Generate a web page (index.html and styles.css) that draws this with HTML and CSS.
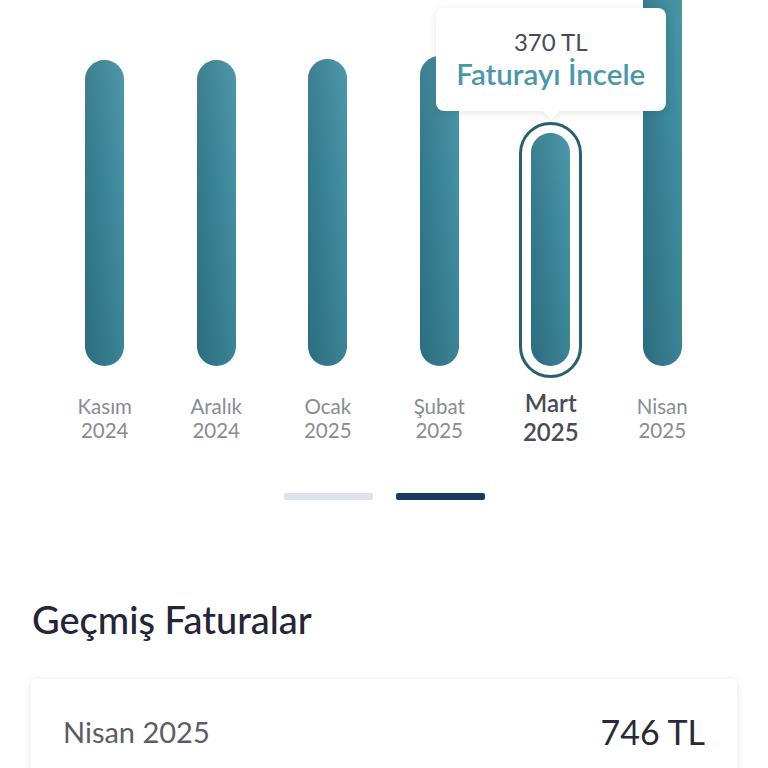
FILE: index.html
```html
<!DOCTYPE html>
<html lang="tr">
<head>
<meta charset="utf-8">
<link rel="stylesheet" href="styles.css">
</head>
<body>
<div class="page">
  <div class="chart">
    <div class="col">
      <div class="bar-area"><div class="bar" style="height:306px"></div></div>
      <div class="label">Kasım<br>2024</div>
    </div>
    <div class="col">
      <div class="bar-area"><div class="bar" style="height:306px"></div></div>
      <div class="label">Aralık<br>2024</div>
    </div>
    <div class="col">
      <div class="bar-area"><div class="bar" style="height:307px"></div></div>
      <div class="label">Ocak<br>2025</div>
    </div>
    <div class="col">
      <div class="bar-area"><div class="bar" style="height:310px"></div></div>
      <div class="label">Şubat<br>2025</div>
    </div>
    <div class="col">
      <div class="bar-area">
        <div class="bar selected" style="height:233px">
          <div class="tooltip">
            <div class="tt-amount">370 TL</div>
            <div class="tt-link">Faturayı İncele</div>
          </div>
        </div>
      </div>
      <div class="label active">Mart<br>2025</div>
    </div>
    <div class="col">
      <div class="bar-area"><div class="bar" style="height:420px"></div></div>
      <div class="label">Nisan<br>2025</div>
    </div>
  </div>

  <div class="pager">
    <span class="dot"></span>
    <span class="dot current"></span>
  </div>

  <h2 class="section-title">Geçmiş Faturalar</h2>

  <div class="card">
    <span class="card-month">Nisan 2025</span>
    <span class="card-amount">746 TL</span>
  </div>
</div>
</body>
</html>
```

FILE: styles.css
```css
html, body {
  margin: 0;
  padding: 0;
  background: #ffffff;
}
body {
  font-family: Lato, "Noto Sans", sans-serif;
  overflow: hidden;
}
.page {
  width: 768px;
}
.chart {
  display: flex;
  padding-left: 49px;
}
.col {
  width: 111.5px;
  display: flex;
  flex-direction: column;
  align-items: center;
}
.bar-area {
  height: 366px;
  display: flex;
  flex-direction: column;
  justify-content: flex-end;
  align-items: center;
  width: 100%;
}
.bar {
  width: 39px;
  flex-shrink: 0;
  border-radius: 20px;
  background:
    linear-gradient(to bottom, rgba(255, 255, 255, 0.06) 0%, rgba(255, 255, 255, 0) 40%, rgba(0, 30, 40, 0.12) 100%),
    linear-gradient(to right, #32788a 0%, #3a8497 50%, #4391a4 100%);
  position: relative;
}
.bar.selected::after {
  content: "";
  position: absolute;
  left: -12px;
  right: -12px;
  top: -11px;
  bottom: -12px;
  border: 3px solid #28606f;
  border-radius: 40px;
}
.tooltip {
  position: absolute;
  z-index: 10;
  bottom: calc(100% + 22px);
  left: 50%;
  transform: translateX(-50%);
  width: 230px;
  height: 103px;
  box-sizing: border-box;
  background: #ffffff;
  border-radius: 8px;
  box-shadow: 0 2px 10px rgba(0, 0, 0, 0.10);
  display: flex;
  flex-direction: column;
  align-items: center;
  justify-content: center;
  padding-bottom: 2px;
}
.tooltip::after {
  content: "";
  position: absolute;
  bottom: -6px;
  left: 50%;
  width: 12px;
  height: 12px;
  margin-left: -6px;
  background: #ffffff;
  transform: rotate(45deg);
  box-shadow: 3px 3px 5px rgba(0, 0, 0, 0.05);
}
.tt-amount {
  font-size: 24px;
  color: #4b4b55;
  line-height: 30px;
  position: relative;
  z-index: 1;
}
.tt-link {
  font-size: 29.5px;
  font-weight: 600;
  color: #4898aa;
  line-height: 34px;
  position: relative;
  z-index: 1;
}
.label {
  margin-top: 28px;
  font-size: 20.5px;
  line-height: 24px;
  color: #8a8b94;
  text-align: center;
}
.label.active {
  margin-top: 22px;
  font-size: 24px;
  line-height: 29px;
  font-weight: 600;
  color: #4a4b55;
}
.pager {
  display: flex;
  justify-content: center;
  gap: 23px;
  margin-top: 47px;
  padding-left: 1px;
}
.dot {
  width: 89px;
  height: 7px;
  border-radius: 2px;
  background: #e1e3ea;
}
.dot.current {
  background: #1c3762;
}
.section-title {
  margin: 96px 0 0 32px;
  font-size: 38px;
  font-weight: 500;
  color: #252539;
  line-height: 46px;
}
.card {
  margin: 37px 31px 0 31px;
  height: 110px;
  border-radius: 6px;
  background: #ffffff;
  box-shadow: 0 1px 8px rgba(0, 0, 0, 0.10);
  display: flex;
  justify-content: space-between;
  align-items: flex-start;
  padding: 34px 32px 0 32px;
  box-sizing: border-box;
}
.card-month {
  font-size: 29px;
  color: #5b5c67;
  line-height: 38px;
}
.card-amount {
  font-size: 34px;
  color: #2a2a37;
  line-height: 38px;
}
```
